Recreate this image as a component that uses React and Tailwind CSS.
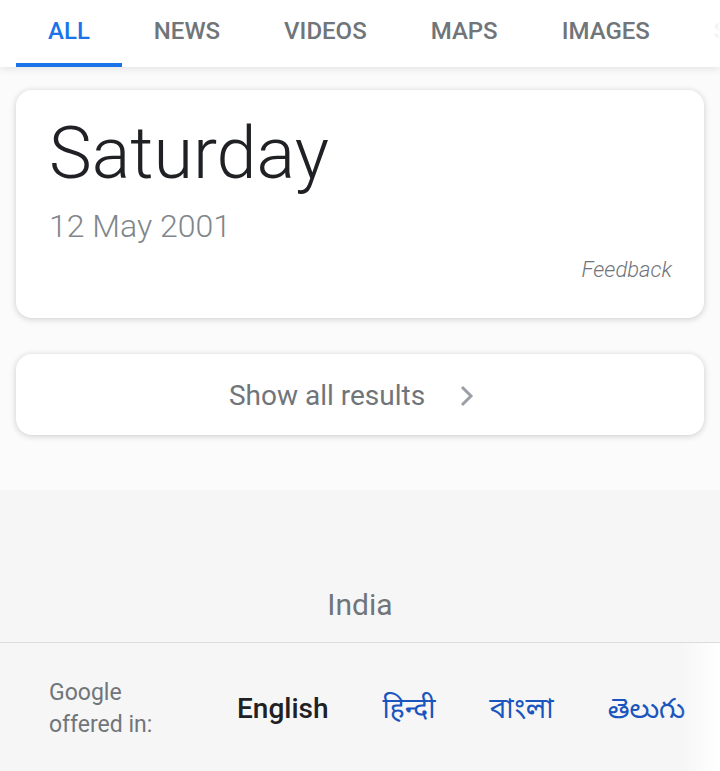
import React from "react";

const TABS = ["ALL", "NEWS", "VIDEOS", "MAPS", "IMAGES", "SHOPPING"];
const LANGS = [
  { label: "हिन्दी" },
  { label: "বাংলা" },
  { label: "తెలుగు" },
];

const roboto = { fontFamily: "Roboto, 'Noto Sans', 'Noto Sans Devanagari', 'Noto Sans Bengali', 'Noto Sans Telugu', sans-serif" };

export default function App() {
  return (
    <div className="w-[720px] h-[771px] overflow-hidden bg-[#fbfbfb] flex flex-col" style={roboto}>
      {/* tab bar */}
      <div className="relative h-[67px] shrink-0 bg-white shadow-[0_2px_8px_rgba(32,33,36,0.10)] z-10 overflow-hidden">
        <div className="flex pl-4 h-full whitespace-nowrap">
          {TABS.map((t, i) => (
            <div key={t} className={`relative h-full px-8 flex items-center text-[24px] font-medium pb-[5px] ${i === 0 ? "text-[#1a73e8]" : "text-[#70757a]"}`}>
              {t}
              {i === 0 && <div className="absolute left-0 right-0 bottom-0 h-[4px] bg-[#1a73e8]" />}
            </div>
          ))}
        </div>
        <div className="absolute right-0 top-0 h-full w-[40px] bg-gradient-to-r from-white/0 to-white" />
      </div>

      {/* results */}
      <div className="px-4 pt-[23px] flex flex-col gap-[36px]">
        <div className="bg-white rounded-2xl shadow-[0_1px_6px_rgba(32,33,36,0.22)] h-[228px] pl-[33px] pr-[32px] pt-[28px] flex flex-col">
          <div className="text-[72px] leading-none font-light text-[#202124]">Saturday</div>
          <div className="mt-[20px] text-[32px] leading-none font-light text-[#80868b]">12 May 2001</div>
          <div className="mt-[17px] text-[22px] leading-none font-light italic text-[#70757a] text-right">Feedback</div>
        </div>
        <div className="bg-white rounded-2xl shadow-[0_1px_6px_rgba(32,33,36,0.22)] h-[81px] flex items-center justify-center gap-[34px] pr-[16px] pt-[3px]">
          <span className="text-[28px] text-[#70757a]">Show all results</span>
          <svg width="16" height="24" viewBox="0 0 16 24" fill="none" stroke="#9aa0a6" strokeWidth="3" strokeLinecap="square">
            <path d="M4 4 L12 12 L4 20" />
          </svg>
        </div>
      </div>

      {/* footer */}
      <div className="mt-[55px] flex-1 bg-[#f6f6f6] flex flex-col">
        <div className="h-[153px] flex items-end justify-center pb-[22px] border-b border-[#dadce0]">
          <span className="text-[30px] leading-none text-[#70757a]">India</span>
        </div>
        <div className="relative h-[128px] flex items-center pl-[49px] pt-[4px] whitespace-nowrap">
          <div className="w-[188px] text-[23px] leading-[32px] text-[#70757a]">
            Google<br />offered in:
          </div>
          <div className="flex items-center gap-[54px] text-[28px]">
            <span className="font-medium text-[#202124]">English</span>
            {LANGS.map((l) => (
              <span key={l.label} className="text-[#1a54be]">{l.label}</span>
            ))}
          </div>
          <div className="absolute right-0 top-0 h-full w-[40px] bg-gradient-to-r from-white/0 to-white" />
        </div>
      </div>
    </div>
  );
}
